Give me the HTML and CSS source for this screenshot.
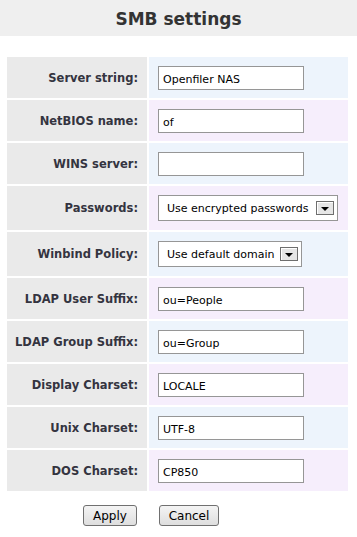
FILE: index.html
```html
<!DOCTYPE html>
<html>
<head>
  <link rel="stylesheet" href="styles.css">
</head>
<body>
  <div class="page-title">SMB settings</div>

  <form class="smb-form">
    <table class="settings">
      <tr class="row-blue">
        <td class="label">Server string:</td>
        <td class="value"><input class="text-input" type="text" value="Openfiler NAS"></td>
      </tr>
      <tr class="row-purple">
        <td class="label">NetBIOS name:</td>
        <td class="value"><input class="text-input" type="text" value="of"></td>
      </tr>
      <tr class="row-blue">
        <td class="label">WINS server:</td>
        <td class="value"><input class="text-input" type="text" value=""></td>
      </tr>
      <tr class="row-purple select-row">
        <td class="label">Passwords:</td>
        <td class="value">
          <div class="select select-wide">
            <span class="select-text">Use encrypted passwords</span>
            <span class="select-arrow"></span>
          </div>
        </td>
      </tr>
      <tr class="row-blue select-row">
        <td class="label">Winbind Policy:</td>
        <td class="value">
          <div class="select select-narrow">
            <span class="select-text">Use default domain</span>
            <span class="select-arrow"></span>
          </div>
        </td>
      </tr>
      <tr class="row-purple">
        <td class="label">LDAP User Suffix:</td>
        <td class="value"><input class="text-input" type="text" value="ou=People"></td>
      </tr>
      <tr class="row-blue">
        <td class="label">LDAP Group Suffix:</td>
        <td class="value"><input class="text-input" type="text" value="ou=Group"></td>
      </tr>
      <tr class="row-purple">
        <td class="label">Display Charset:</td>
        <td class="value"><input class="text-input" type="text" value="LOCALE"></td>
      </tr>
      <tr class="row-blue">
        <td class="label">Unix Charset:</td>
        <td class="value"><input class="text-input" type="text" value="UTF-8"></td>
      </tr>
      <tr class="row-purple">
        <td class="label">DOS Charset:</td>
        <td class="value"><input class="text-input" type="text" value="CP850"></td>
      </tr>
    </table>

    <div class="buttons">
      <button type="button" class="btn btn-apply">Apply</button>
      <button type="button" class="btn btn-cancel">Cancel</button>
    </div>
  </form>
</body>
</html>
```

FILE: styles.css
```css
body {
  margin: 0;
  font-family: "DejaVu Sans", Verdana, sans-serif;
  font-size: 11px;
  color: #333;
  background-color: #ffffff;
}

.page-title {
  background-color: #efefef;
  height: 36px;
  line-height: 38px;
  text-align: center;
  font-size: 17px;
  font-weight: bold;
  color: #333;
}

.smb-form {
  margin: 0;
}

.settings {
  margin: 19px 0 0 5px;
  border-spacing: 2px;
}

.settings td {
  height: 41px;
  padding: 0;
}

.settings .select-row td {
  height: 44px;
}

.label {
  width: 131px;
  padding-right: 9px !important;
  background-color: #eaeaea;
  text-align: right;
  font-size: 11.5px;
  font-weight: bold;
  color: #343440;
}

.value {
  width: 190px;
  padding-left: 9px !important;
}

.row-blue .value {
  background-color: #edf4fc;
}

.row-purple .value {
  background-color: #f6eefc;
}

.text-input {
  display: block;
  box-sizing: border-box;
  width: 146px;
  height: 24px;
  margin: 1px 0 0 0;
  padding: 2px 4px 0 4px;
  border: 1px solid #969696;
  background-color: #ffffff;
  font-family: "DejaVu Sans", Verdana, sans-serif;
  font-size: 11px;
  color: #000;
}

.select {
  display: flex;
  align-items: center;
  box-sizing: border-box;
  height: 26px;
  padding: 0 3px 0 8px;
  border: 1px solid #969696;
  background-color: #ffffff;
  color: #000;
  font-size: 11px;
}

.select-wide {
  width: 180px;
}

.select-narrow {
  width: 144px;
}

.select-text {
  flex: 1;
  white-space: nowrap;
}

.select-arrow {
  position: relative;
  box-sizing: border-box;
  width: 18px;
  height: 14px;
  margin-left: 2px;
  border: 1px solid #6e6e6e;
  background-color: #e6e6e6;
  box-shadow: inset 1px 1px 0 #ffffff;
}

.select-arrow::after {
  content: "";
  position: absolute;
  left: 4px;
  top: 5px;
  border-left: 4px solid transparent;
  border-right: 4px solid transparent;
  border-top: 4px solid #000;
}

.buttons {
  margin: 12px 0 0 83px;
  display: flex;
  gap: 22px;
}

.btn {
  box-sizing: border-box;
  height: 21px;
  padding: 0;
  border: 1px solid #707070;
  border-radius: 3px;
  background: linear-gradient(#f4f4f4, #dedede);
  font-family: "DejaVu Sans", Verdana, sans-serif;
  font-size: 12px;
  color: #000;
}

.btn-apply {
  width: 54px;
}

.btn-cancel {
  width: 60px;
}
```
